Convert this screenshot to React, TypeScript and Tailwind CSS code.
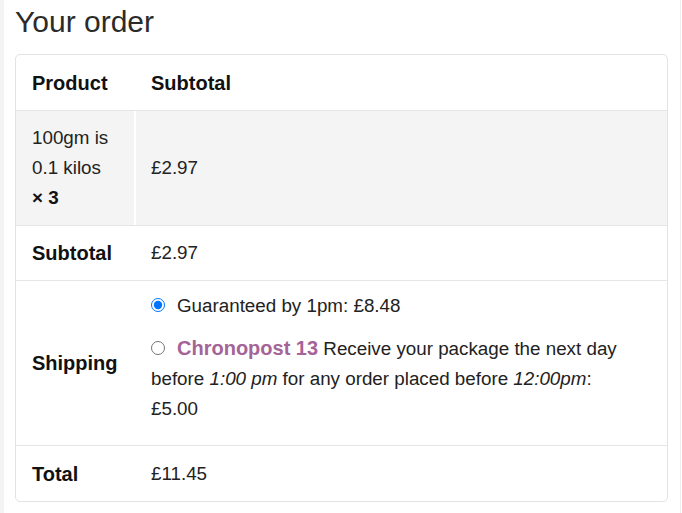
import React from "react";

const font = { fontFamily: '"Liberation Sans", Arial, sans-serif' };

function Row({
  label,
  children,
  className = "",
  rightClass = "",
}: {
  label: React.ReactNode;
  children: React.ReactNode;
  className?: string;
  rightClass?: string;
}) {
  return (
    <div className={`flex border-b border-[#e6e6e6] last:border-b-0 ${className}`}>
      <div className="w-[118px] shrink-0 flex items-center pl-[16px]">
        {label}
      </div>
      <div className="w-[2px] shrink-0 bg-white" />
      <div className={`flex-1 flex items-center pl-[15px] pr-[40px] ${rightClass}`}>
        {children}
      </div>
    </div>
  );
}

export default function App() {
  return (
    <div
      className="w-[682px] h-[513px] bg-white flex text-[#222] overflow-hidden"
      style={font}
    >
      <div className="w-[4px] bg-[#f4f4f4] shrink-0" />
      <div className="w-[676px] shrink-0 pl-[11px] pr-[8px]">
        <h3 className="text-[30px] leading-[44px] text-[#2b2b2b] mb-[10px]">
          Your order
        </h3>
        <div className="w-[653px] border border-[#e3e3e3] rounded-[5px] overflow-hidden text-[18.8px] leading-[30px]">
          <Row
            className="h-[56px]"
            label={<span className="font-bold text-[20px] text-[#111]">Product</span>}
          >
            <span className="font-bold text-[20px] text-[#111]">Subtotal</span>
          </Row>
          <div className="flex h-[115px] border-b border-[#e6e6e6]">
            <div className="w-[118px] shrink-0 bg-[#f4f4f4] pl-[16px] flex items-center">
              <div>
                100gm is
                <br />
                0.1 kilos
                <br />
                <strong className="font-bold text-[#111]">× 3</strong>
              </div>
            </div>
            <div className="w-[2px] shrink-0 bg-white" />
            <div className="flex-1 bg-[#f4f4f4] pl-[15px] flex items-center">
              £2.97
            </div>
          </div>
          <Row
            className="h-[55px]"
            label={<span className="font-bold text-[20px] text-[#111]">Subtotal</span>}
          >
            £2.97
          </Row>
          <Row
            className="h-[165px]"
            rightClass="!items-start pt-[10px]"
            label={<span className="font-bold text-[20px] text-[#111]">Shipping</span>}
          >
            <ul>
              <li className="mb-[12px]">
                <input
                  type="radio"
                  name="ship"
                  defaultChecked
                  className="w-[14px] h-[14px] m-0 mr-[12px] align-[0px] accent-[#0075ff]"
                />
                Guaranteed by 1pm: £8.48
              </li>
              <li>
                <input
                  type="radio"
                  name="ship"
                  className="w-[14px] h-[14px] m-0 mr-[12px] align-[0px]"
                />
                <strong className="font-bold text-[20px] text-[#a46497]">
                  Chronopost 13
                </strong>{" "}
                Receive your package the next day before <em>1:00 pm</em> for any
                order placed before <em>12:00pm</em>: £5.00
              </li>
            </ul>
          </Row>
          <Row
            className="h-[55px]"
            label={<span className="font-bold text-[20px] text-[#111]">Total</span>}
          >
            £11.45
          </Row>
        </div>
      </div>
      <div className="w-[1px] bg-[#eeeeee] shrink-0" />
    </div>
  );
}
